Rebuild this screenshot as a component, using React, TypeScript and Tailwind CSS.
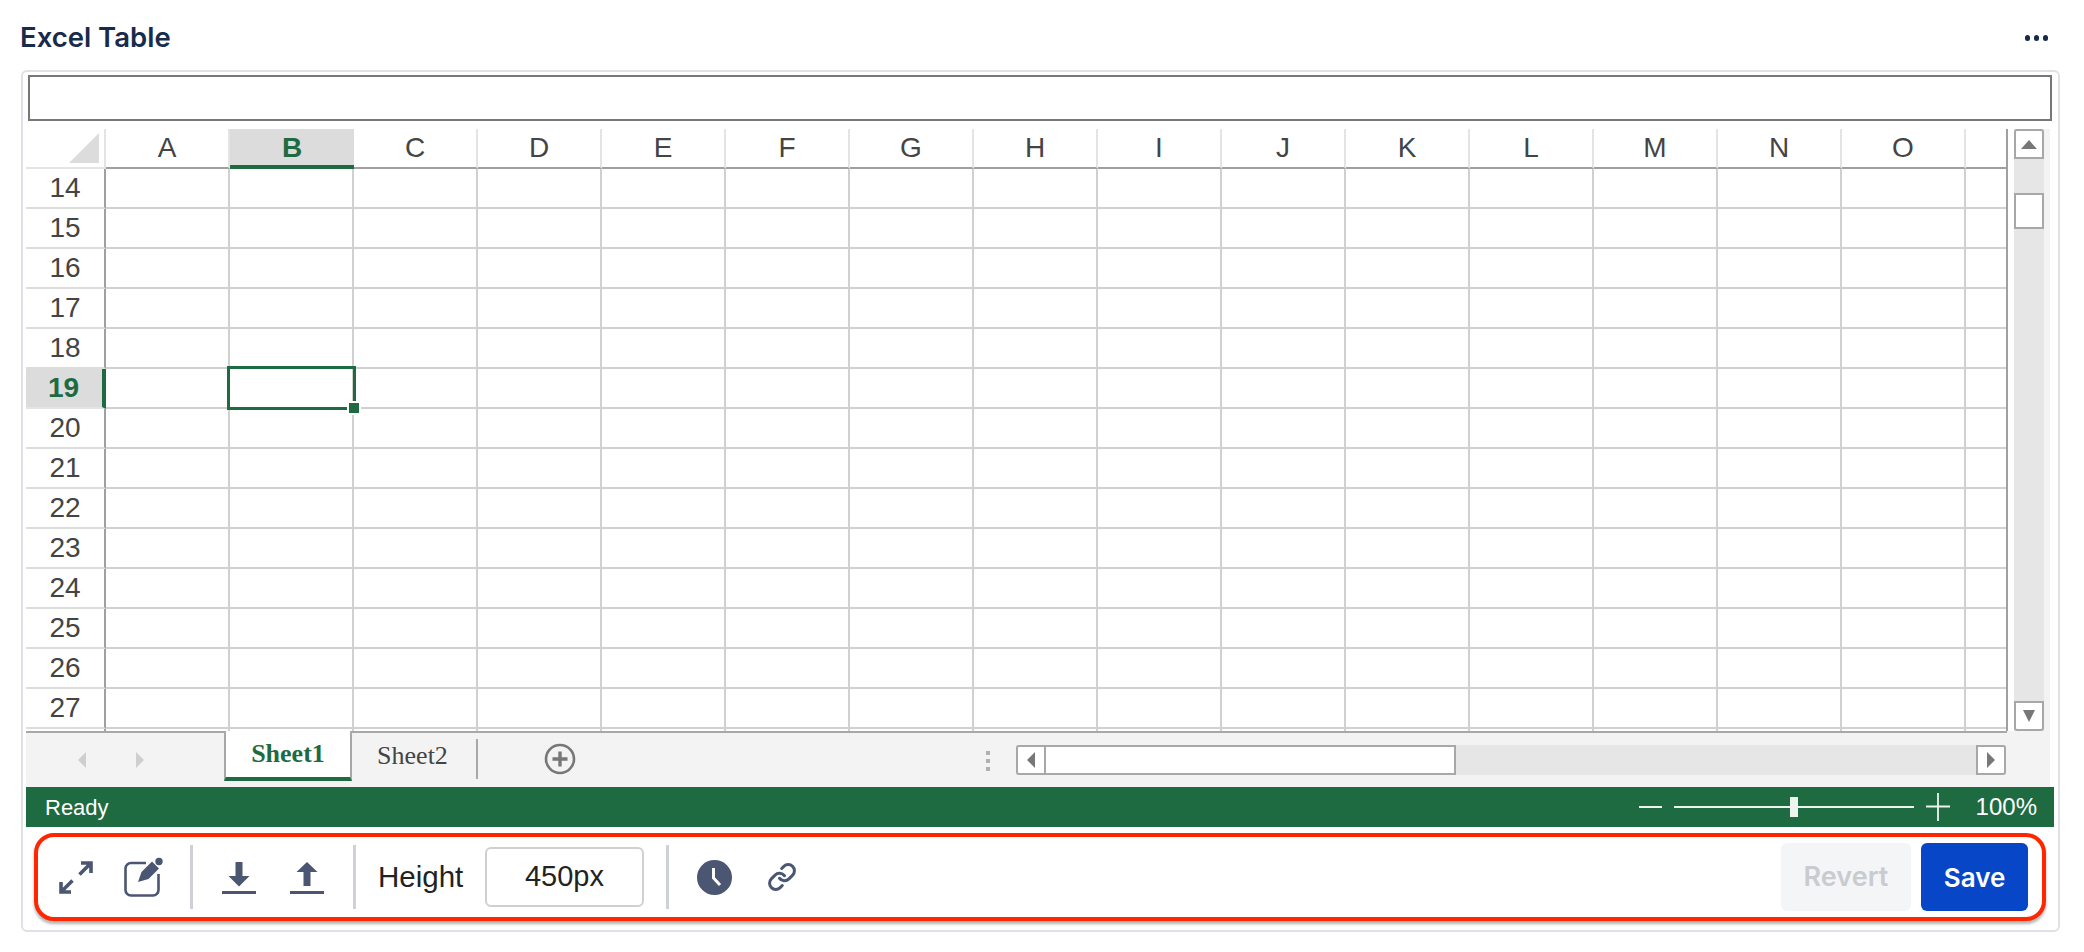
import React from "react";
import { Link } from "lucide-react";

const COLS = ["A", "B", "C", "D", "E", "F", "G", "H", "I", "J", "K", "L", "M", "N", "O"];
const ROWS = [14, 15, 16, 17, 18, 19, 20, 21, 22, 23, 24, 25, 26, 27];

function HeaderRow() {
  return (
    <div className="flex h-[40px]">
      <div className="w-[80px] h-full border-r-2 border-r-[#e2e6e2] border-b-2 border-b-[#e2e6e2] flex items-start justify-end pt-[4px] pr-[5px]">
        <svg width="30" height="30" viewBox="0 0 30 30">
          <polygon points="30,0 30,30 0,30" fill="#dcdcdc" />
        </svg>
      </div>
      {COLS.map((c) =>
        c === "B" ? (
          <div
            key={c}
            className="w-[124px] h-full bg-[#dcdcdc] border-b-4 border-b-[#1e6b41] flex items-center justify-center text-[28px] font-bold text-[#1e6b41] pt-[2px]"
          >
            {c}
          </div>
        ) : (
          <div
            key={c}
            className="w-[124px] h-full border-r-2 border-r-[#e2e6e2] border-b-2 border-b-[#a0a0a0] flex items-center justify-center text-[28px] text-[#444444]"
          >
            {c}
          </div>
        )
      )}
      <div className="flex-1 h-full border-b-2 border-b-[#a0a0a0]" />
    </div>
  );
}

function Row({ n }: { n: number }) {
  const active = n === 19;
  return (
    <div className="flex h-[40px]">
      <div
        className={
          active
            ? "w-[80px] h-full bg-[#dcdcdc] border-r-4 border-r-[#1e6b41] border-b-2 border-b-[#e2e6e2] flex items-center justify-center text-[28px] font-bold text-[#1e6b41] pr-[1px]"
            : "w-[80px] h-full border-r-2 border-r-[#a0a0a0] border-b-2 border-b-[#dcdedc] flex items-center justify-center text-[28px] text-[#444444]"
        }
      >
        {n}
      </div>
      {COLS.map((c) => (
        <div key={c} className="w-[124px] h-full border-r-2 border-r-[#d0d0d0] border-b-2 border-b-[#d0d0d0]" />
      ))}
      <div className="flex-1 h-full border-b-2 border-b-[#d0d0d0]" />
    </div>
  );
}

function VScroll() {
  return (
    <div className="ml-[6px] w-[36px] bg-[#f3f3f3] flex">
      <div className="w-[30px] bg-[#e6e6e6] flex flex-col">
        <div className="h-[30px] bg-white border-2 border-[#a8a8a8] rounded-t-[3px] flex items-center justify-center">
          <svg width="16" height="9" viewBox="0 0 16 9">
            <polygon points="8,0 16,9 0,9" fill="#777777" />
          </svg>
        </div>
        <div className="mt-[34px] h-[36px] bg-white border-2 border-[#a8a8a8]" />
        <div className="mt-auto h-[30px] bg-white border-2 border-[#a8a8a8] rounded-b-[3px] flex items-center justify-center">
          <svg width="12" height="12" viewBox="0 0 12 12">
            <polygon points="0,0 12,0 6,12" fill="#777777" />
          </svg>
        </div>
      </div>
    </div>
  );
}

function SheetBar() {
  return (
    <div className="h-[56px] w-[2024px] bg-[#f3f3f3] flex items-start relative">
      <div className="absolute left-0 top-0 h-[2px] w-[1981px] bg-[#a8a8a8]" />
      <div className="w-[198px] h-[50px] flex items-center pt-[8px]">
        <svg className="ml-[52px]" width="8" height="16" viewBox="0 0 8 16">
          <polygon points="8,0 8,16 0,8" fill="#cfcfcf" />
        </svg>
        <svg className="ml-[50px]" width="8" height="16" viewBox="0 0 8 16">
          <polygon points="0,0 0,16 8,8" fill="#cfcfcf" />
        </svg>
      </div>
      <div className="relative w-[128px] h-[50px] bg-white border-x-2 border-x-[#a8a8a8] border-b-4 border-b-[#1e6b41] flex items-center justify-center font-['Liberation_Serif',serif] font-bold text-[26px] text-[#1e6b41] pb-[2px]">
        Sheet1
      </div>
      <div className="w-[124px] h-[40px] mt-[8px] flex items-center justify-center font-['Liberation_Serif',serif] text-[26px] text-[#444444] pb-[8px] pr-[3px]">
        Sheet2
      </div>
      <div className="w-[2px] h-[40px] mt-[8px] bg-[#a8a8a8]" />
      <svg className="ml-[66px] mt-[12px]" width="32" height="32" viewBox="0 0 32 32">
        <circle cx="16" cy="16" r="14" fill="none" stroke="#777777" strokeWidth="2.6" />
        <path d="M16 8.5V23.5M8.5 16H23.5" stroke="#777777" strokeWidth="3.4" />
      </svg>
      <div className="ml-[410px] mt-[20px] flex flex-col gap-[4px]">
        <div className="w-[4px] h-[4px] bg-[#b0b0b0]" />
        <div className="w-[4px] h-[4px] bg-[#b0b0b0]" />
        <div className="w-[4px] h-[4px] bg-[#b0b0b0]" />
      </div>
      <div className="ml-[26px] mt-[14px] w-[990px] h-[30px] bg-[#e6e6e6] flex">
        <div className="w-[30px] h-full bg-white border-2 border-[#a8a8a8] rounded-l-[3px] flex items-center justify-center">
          <svg width="8" height="16" viewBox="0 0 8 16">
            <polygon points="8,0 8,16 0,8" fill="#777777" />
          </svg>
        </div>
        <div className="w-[410px] h-full bg-white border-y-2 border-r-2 border-[#a8a8a8]" />
        <div className="ml-auto w-[30px] h-full bg-white border-2 border-[#a8a8a8] rounded-r-[3px] flex items-center justify-center">
          <svg width="8" height="16" viewBox="0 0 8 16">
            <polygon points="0,0 0,16 8,8" fill="#777777" />
          </svg>
        </div>
      </div>
    </div>
  );
}

function StatusBar() {
  return (
    <div className="h-[40px] w-[2028px] bg-[#1e6b41] flex items-center text-white text-[22px]">
      <span className="ml-[19px]">Ready</span>
      <div className="ml-auto flex items-center">
        <div className="w-[23px] h-[2px] bg-[#eef3f0]" />
        <div className="ml-[12px] w-[240px] h-[2px] bg-[#eef3f0] flex items-center">
          <div className="ml-[116px] w-[8px] h-[20px] bg-[#eef3f0] shrink-0" />
        </div>
        <svg className="ml-[12px]" width="24" height="28" viewBox="0 0 24 28">
          <path d="M0 13.5H24M12 0V28" stroke="#eef3f0" strokeWidth="1.8" />
        </svg>
        <span className="ml-[26px] mr-[17px] text-[24px]">100%</span>
      </div>
    </div>
  );
}

const iconColor = "#4a5672";

function ExpandIcon() {
  return (
    <svg width="34" height="33" viewBox="0 0 34 33" fill="none" stroke={iconColor} strokeWidth="3.6">
      <path d="M22 2H32V12M32 2L20.5 13.5" />
      <path d="M12 31H2V21M2 31L13.5 19.5" />
    </svg>
  );
}

function NoteIcon() {
  return (
    <svg width="40" height="40" viewBox="0 0 40 40" fill="none">
      <path d="M22 6H7a5.5 5.5 0 0 0-5.5 5.5V33A5.5 5.5 0 0 0 7 38.5H29A5.5 5.5 0 0 0 34.5 33V17" stroke={iconColor} strokeWidth="2.6" />
      <path d="M14 25L17.5 15L28 4.5L35 11.5L24.5 22Z" fill={iconColor} />
      <circle cx="35" cy="4.5" r="3.7" fill={iconColor} />
    </svg>
  );
}

function DownIcon() {
  return (
    <svg width="34" height="33" viewBox="0 0 34 33" fill={iconColor}>
      <path d="M13.5 1H20.5V15H27.5L17 25.5L6.5 15H13.5Z" />
      <rect x="0" y="30" width="34" height="3" />
    </svg>
  );
}

function UpIcon() {
  return (
    <svg width="34" height="33" viewBox="0 0 34 33" fill={iconColor}>
      <path d="M17 1L27.5 11H20.5V25H13.5V11H6.5Z" />
      <rect x="0" y="30" width="34" height="3" />
    </svg>
  );
}

function ClockIcon() {
  return (
    <svg width="35" height="35" viewBox="0 0 35 35">
      <circle cx="17.5" cy="17.5" r="17.5" fill={iconColor} />
      <path d="M16.5 8V18L23 25" fill="none" stroke="#ffffff" strokeWidth="3" />
    </svg>
  );
}

function Toolbar() {
  return (
    <div className="mt-[6px] ml-[8px] w-[2012px] h-[88px] border-4 border-[#ff2600] rounded-[20px] bg-white shadow-[0_3px_3px_rgba(0,0,0,0.3)] flex items-center pl-[5px] pr-[14px]">
      <div className="w-[66px] flex justify-center"><ExpandIcon /></div>
      <div className="w-[66px] pl-[3px] flex justify-center"><NoteIcon /></div>
      <div className="ml-[15px] w-[3px] h-[64px] bg-[#ced1d8]" />
      <div className="ml-[12px] w-[68px] flex justify-center"><DownIcon /></div>
      <div className="w-[68px] flex justify-center"><UpIcon /></div>
      <div className="ml-[12px] w-[3px] h-[64px] bg-[#ced1d8]" />
      <span className="ml-[22px] w-[84px] text-[29.5px] text-[#222222] whitespace-nowrap">Height</span>
      <div className="ml-[23px] w-[159px] h-[60px] border-2 border-[#d0d0d0] rounded-[6px] flex items-center justify-center text-[29px] text-[#222222]">
        450px
      </div>
      <div className="ml-[22px] w-[3px] h-[64px] bg-[#ced1d8]" />
      <div className="ml-[11px] w-[68px] flex justify-center"><ClockIcon /></div>
      <div className="w-[68px] flex justify-center">
        <Link size={30} strokeWidth={2.4} color={iconColor} />
      </div>
      <div className="ml-auto w-[130px] h-[68px] rounded-[6px] bg-[#f4f5f7] flex items-center justify-center font-['Inter',sans-serif] font-semibold text-[27px] text-[#c9cbcf]">
        Revert
      </div>
      <div className="ml-[10px] w-[107px] h-[68px] rounded-[6px] bg-[#0747c7] flex items-center justify-center font-['Inter',sans-serif] font-semibold text-[26px] text-white">
        Save
      </div>
    </div>
  );
}

export default function App() {
  return (
    <div className="w-[2084px] h-[952px] bg-white font-['Liberation_Sans',sans-serif] overflow-hidden">
      <div className="h-[70px] pl-[20px] pr-[36px] flex items-center justify-between pt-[6px]">
        <span className="font-['Inter',sans-serif] font-semibold text-[27.5px] text-[#172b4d]">Excel Table</span>
        <div className="flex gap-[3.5px]">
          <div className="w-[5.5px] h-[5.5px] rounded-full bg-[#172b4d]" />
          <div className="w-[5.5px] h-[5.5px] rounded-full bg-[#172b4d]" />
          <div className="w-[5.5px] h-[5.5px] rounded-full bg-[#172b4d]" />
        </div>
      </div>
      <div className="ml-[21px] w-[2039px] h-[862px] border-2 border-[#dfe1e6] rounded-[6px] pt-[3px] pl-[3px]">
        <div className="ml-[2px] w-[2024px] h-[46px] border-2 border-[#777777] bg-white" />
        <div className="mt-[8px] flex h-[602px]">
          <div className="relative w-[1982px] border-r-2 border-r-[#a0a0a0] flex flex-col">
            <HeaderRow />
            {ROWS.map((n) => (
              <Row key={n} n={n} />
            ))}
            <div className="flex h-[2px]">
              <div className="w-[80px] h-full border-r-2 border-r-[#a0a0a0]" />
              {COLS.map((c) => (
                <div key={c} className="w-[124px] h-full border-r-2 border-r-[#d0d0d0]" />
              ))}
            </div>
            <div className="absolute left-[201px] top-[237px] w-[129px] h-[44px] border-[3.5px] border-[#1e6b41]" />
            <div className="absolute left-[321px] top-[272px] w-[14px] h-[14px] bg-[#1e6b41] border-2 border-white" />
          </div>
          <VScroll />
        </div>
        <SheetBar />
        <StatusBar />
        <Toolbar />
      </div>
    </div>
  );
}
